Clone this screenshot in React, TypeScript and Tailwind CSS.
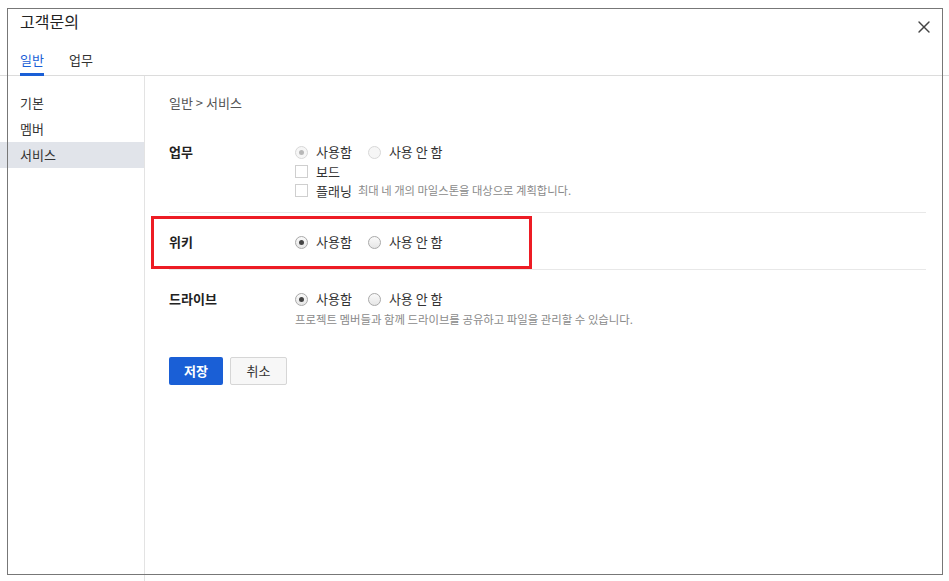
import { X } from 'lucide-react'

const font = { fontFamily: '"Noto Sans CJK KR", "Noto Sans", sans-serif' }

function Radio({ checked, disabled }: { checked?: boolean; disabled?: boolean }) {
  return (
    <span
      className={`inline-flex items-center justify-center w-[13px] h-[13px] rounded-full border ${
        disabled ? 'border-[#d8d8d8] bg-[#f6f6f6]' : 'border-[#a9a9a9] bg-gradient-to-b from-[#fafafa] to-[#e6e6e6]'
      }`}
    >
      {checked && (
        <span className={`w-[5px] h-[5px] rounded-full ${disabled ? 'bg-[#b8b8b8]' : 'bg-[#444]'}`} />
      )}
    </span>
  )
}

function Options({ disabled }: { disabled?: boolean }) {
  return (
    <div className="flex items-center h-[18px] text-[13px] leading-[18px] text-[#333]">
      <Radio checked disabled={disabled} />
      <span className="ml-[8px]">사용함</span>
      <span className="ml-[16px] flex"><Radio disabled={disabled} /></span>
      <span className="ml-[8px]">사용 안 함</span>
    </div>
  )
}

function Check({ label, note }: { label: string; note?: string }) {
  return (
    <div className="flex items-center h-[19px] text-[13px] leading-[19px] text-[#333]">
      <span className="w-[13px] h-[13px] border border-[#cfcfcf] bg-white" />
      <span className="ml-[8px]">{label}</span>
      {note && <span className="ml-[6px] text-[11.3px] text-[#8a8a8a]">{note}</span>}
    </div>
  )
}

export default function App() {
  return (
    <div className="relative w-full h-[581px] bg-white flex flex-col overflow-hidden" style={font}>
      <div className="h-[76px] border-b border-[#dcdcdc] flex flex-col shrink-0">
        <div className="flex items-start justify-between pl-5 pr-[15px] pt-[9px]">
          <h1 className="text-[16px] leading-[24px] text-[#222]">고객문의</h1>
          <X size={20} strokeWidth={1.7} className="text-[#444] mt-[8px]" />
        </div>
        <div className="mt-auto flex gap-[25px] pl-5 text-[13px] leading-[18px]">
          <span className="pb-[4px] border-b-[3px] border-[#1a5fd6] text-[#1a5fd6] mb-[-1px]">일반</span>
          <span className="pb-[4px] border-b-[3px] border-transparent text-[#333] mb-[-1px]">업무</span>
        </div>
      </div>

      <div className="flex flex-1">
        <div className="w-[145px] shrink-0 border-r border-[#e3e3e3] pt-[14px] text-[13px] text-[#333]">
          <div className="h-[26px] flex items-center pl-5">기본</div>
          <div className="h-[26px] flex items-center pl-5">멤버</div>
          <div className="h-[26px] flex items-center pl-5 bg-[#e1e4ea]">서비스</div>
        </div>

        <div className="flex-1 pl-[24px] pr-[23px]">
          <div className="pt-[14px] h-[47px] text-[13px] text-[#555] flex items-start">
            <span className="h-[26px] flex items-center">일반 &gt; 서비스</span>
          </div>

          <div className="flex pt-[20px] pb-[12px] border-b border-[#e8e8e8]">
            <div className="w-[126px] h-[18px] flex items-center text-[13px] font-bold text-[#222]">업무</div>
            <div className="flex flex-col">
              <Options disabled />
              <div className="mt-[1px]">
                <Check label="보드" />
                <Check label="플래닝" note="최대 네 개의 마일스톤을 대상으로 계획합니다." />
              </div>
            </div>
          </div>

          <div className="flex pt-[20px] pb-[18px] border-b border-[#e8e8e8]">
            <div className="w-[126px] h-[18px] flex items-center text-[13px] font-bold text-[#222]">위키</div>
            <Options />
          </div>

          <div className="flex pt-[20px]">
            <div className="w-[126px] h-[18px] flex items-center text-[13px] font-bold text-[#222]">드라이브</div>
            <div className="flex flex-col">
              <Options />
              <div className="mt-[3px] text-[11.4px] leading-[16px] text-[#8a8a8a]">
                프로젝트 멤버들과 함께 드라이브를 공유하고 파일을 관리할 수 있습니다.
              </div>
            </div>
          </div>

          <div className="flex gap-[7px] mt-[30px]">
            <button className="w-[54px] h-[28px] rounded-[2px] bg-[#1a5fd6] text-white text-[13px] font-bold">저장</button>
            <button className="w-[57px] h-[28px] rounded-[2px] border border-[#d6d6d6] bg-[#f7f7f7] text-[#333] text-[13px]">취소</button>
          </div>
        </div>
      </div>

      <div className="absolute left-[7px] top-[8px] w-[936px] h-[567px] border border-[#777] pointer-events-none" />
      <div className="absolute left-[151px] top-[216px] w-[381px] h-[53px] border-[3px] border-[#ed1c24] pointer-events-none" />
    </div>
  )
}
